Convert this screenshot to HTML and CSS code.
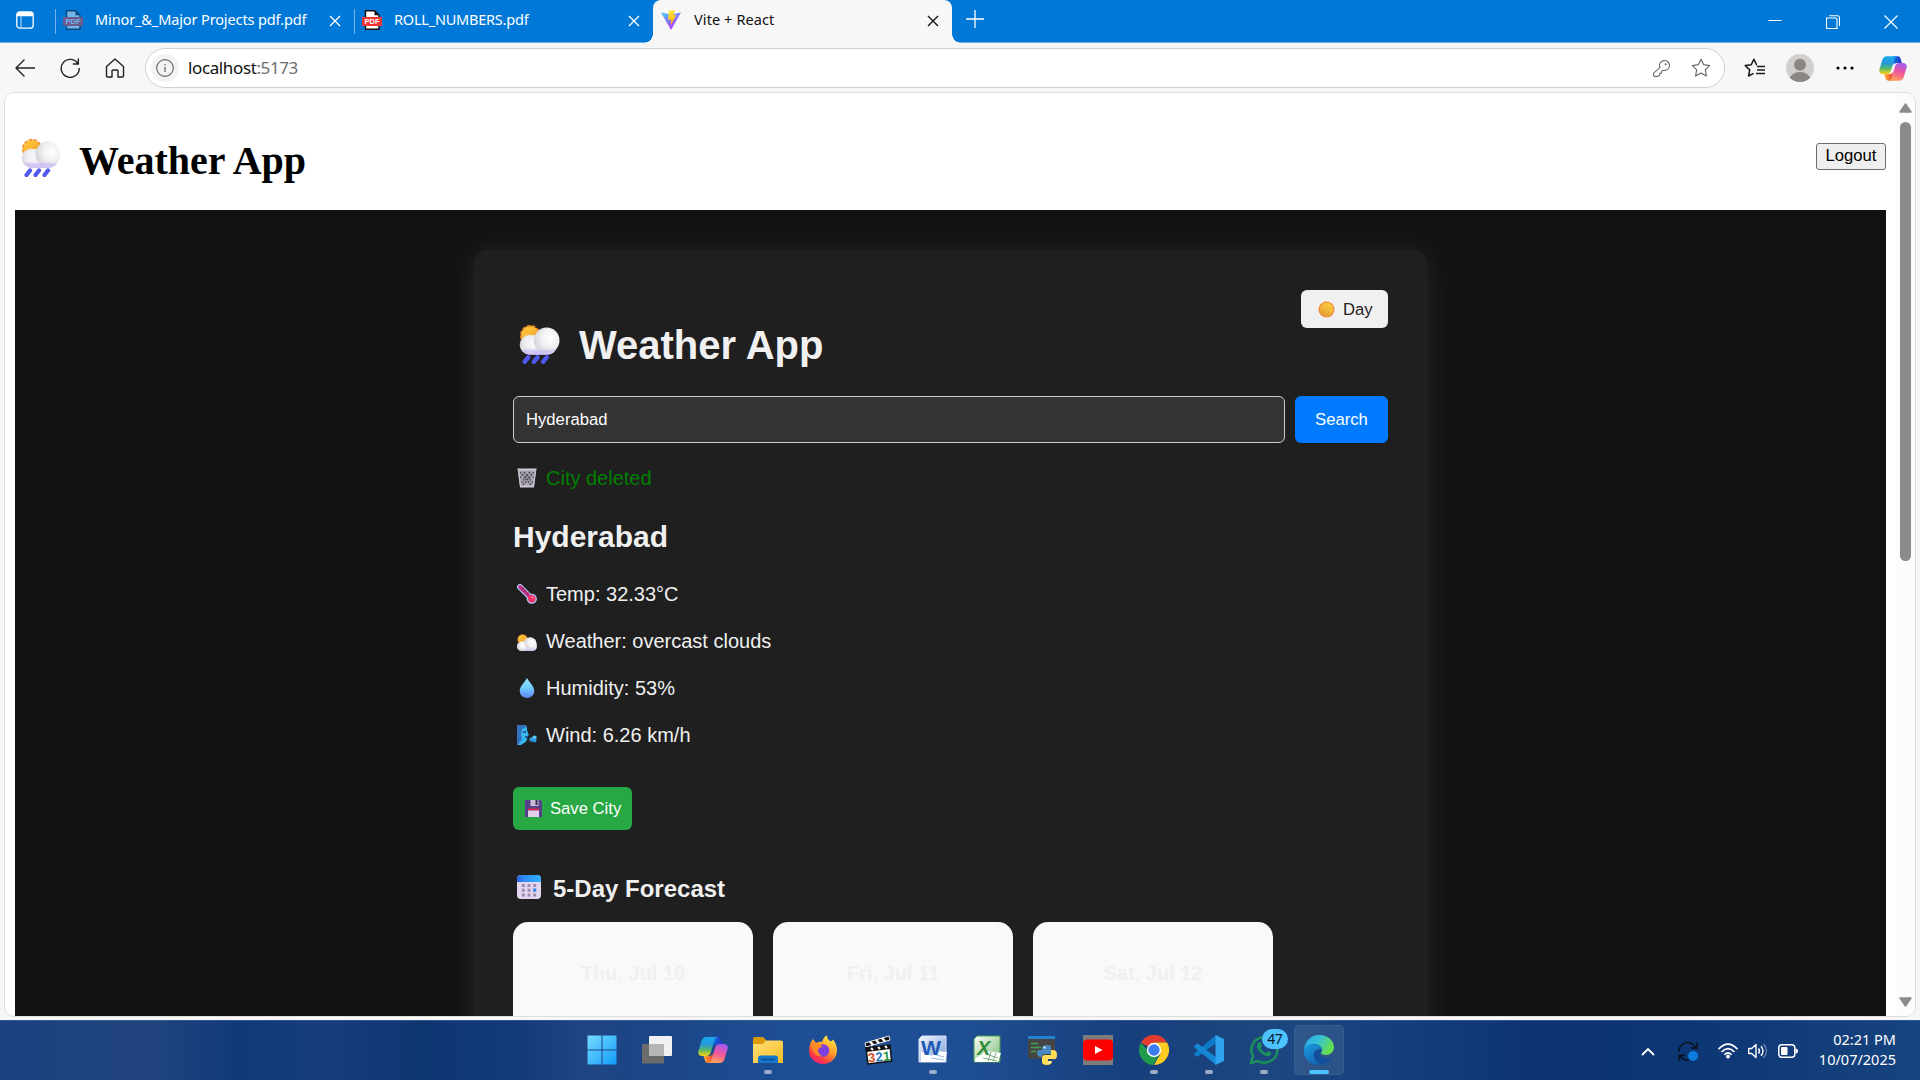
FILE: index.html
```html
<!DOCTYPE html>
<html lang="en">
<head>
<meta charset="utf-8">
<title>Vite + React</title>
<link rel="stylesheet" href="styles.css">
</head>
<body>
<svg class="defs" width="0" height="0" aria-hidden="true">
  <defs>
    <linearGradient id="sun" x1="0" y1="0" x2=".8" y2="1"><stop offset="0" stop-color="#ffd23b"/><stop offset="1" stop-color="#f3962c"/></linearGradient>
    <linearGradient id="day" x1=".8" y1="0" x2=".3" y2="1"><stop offset="0" stop-color="#ffd43f"/><stop offset="1" stop-color="#e09a35"/></linearGradient>
    <radialGradient id="puff" cx=".65" cy=".4" r=".65"><stop offset="0" stop-color="#fff"/><stop offset=".55" stop-color="#f1f0f2"/><stop offset="1" stop-color="#d6d4da"/></radialGradient>
    <linearGradient id="cloud" x1="0" y1="0" x2="0" y2="1"><stop offset="0" stop-color="#e4e3e7"/><stop offset=".6" stop-color="#efedf4"/><stop offset="1" stop-color="#cbbcf3"/></linearGradient>
    <linearGradient id="drop" x1="0" y1="0" x2="0" y2="1"><stop offset="0" stop-color="#9fe6ff"/><stop offset=".5" stop-color="#6fcbff"/><stop offset="1" stop-color="#5f83f2"/></linearGradient>
    <linearGradient id="cal" x1="0" y1="0" x2="1" y2="0"><stop offset="0" stop-color="#2f62e4"/><stop offset=".3" stop-color="#2f8cf8"/><stop offset="1" stop-color="#2fb1ff"/></linearGradient>
    <linearGradient id="vite" x1="0" y1="0" x2=".6" y2="1"><stop offset="0" stop-color="#41d1ff"/><stop offset=".6" stop-color="#8c6bff"/><stop offset="1" stop-color="#bd34fe"/></linearGradient>
    <linearGradient id="bolt" x1="0" y1="0" x2="0" y2="1"><stop offset="0" stop-color="#ffe83f"/><stop offset="1" stop-color="#ffa800"/></linearGradient>
    <linearGradient id="copL" x1=".3" y1="0" x2=".3" y2="1"><stop offset="0" stop-color="#18a9f2"/><stop offset=".4" stop-color="#2598d8"/><stop offset=".68" stop-color="#58b96b"/><stop offset="1" stop-color="#ffd40c"/></linearGradient>
    <linearGradient id="copR" x1=".7" y1="0" x2=".4" y2="1"><stop offset="0" stop-color="#a05cf2"/><stop offset=".5" stop-color="#f0569c"/><stop offset="1" stop-color="#ffa05c"/></linearGradient>
    <linearGradient id="copT" x1="0" y1="0" x2="1" y2="0"><stop offset="0" stop-color="#176ee8"/><stop offset="1" stop-color="#1c35bd"/></linearGradient>
    <linearGradient id="copB" x1="0" y1="0" x2="1" y2="0"><stop offset="0" stop-color="#ffb13a"/><stop offset="1" stop-color="#e8482f"/></linearGradient>
    <linearGradient id="win" x1="0" y1="0" x2="1" y2="1"><stop offset="0" stop-color="#76dcff"/><stop offset="1" stop-color="#129bfa"/></linearGradient>
    <linearGradient id="fold" x1="0" y1="0" x2="1" y2="1"><stop offset="0" stop-color="#ffe07a"/><stop offset="1" stop-color="#f9bd22"/></linearGradient>
    <linearGradient id="fox" x1=".8" y1="0" x2=".2" y2="1"><stop offset="0" stop-color="#fff04a"/><stop offset=".45" stop-color="#ff9a26"/><stop offset=".8" stop-color="#ff3348"/><stop offset="1" stop-color="#e6228f"/></linearGradient>
    <linearGradient id="word" x1="0" y1="0" x2="1" y2="1"><stop offset="0" stop-color="#f4f8fe"/><stop offset="1" stop-color="#7b9dd9"/></linearGradient>
    <linearGradient id="xls" x1="0" y1="0" x2="1" y2="1"><stop offset="0" stop-color="#fafdf8"/><stop offset="1" stop-color="#7fbd78"/></linearGradient>
    <linearGradient id="edgeT" x1="0" y1="0" x2="1" y2=".4"><stop offset="0" stop-color="#2aa5e8"/><stop offset=".5" stop-color="#35c1d9"/><stop offset="1" stop-color="#66e04f"/></linearGradient>
    <linearGradient id="edgeB" x1="0" y1="0" x2="1" y2="1"><stop offset="0" stop-color="#1b9de2"/><stop offset="1" stop-color="#0f4f9e"/></linearGradient>
    <symbol id="i-rain" viewBox="0 0 40 38">
      <circle cx="11" cy="10" r="9" fill="url(#sun)"/><circle cx="11" cy="10" r="9.300" fill="none" stroke="#f38b2b" stroke-width="1.500" stroke-dasharray="3.800 1.200"/>
      <rect x="1" y="10" width="36" height="19" rx="9.5" fill="url(#cloud)"/>
      <circle cx="10" cy="19" r="9.4" fill="url(#puff)" opacity=".7"/><circle cx="27" cy="15" r="12.500" fill="url(#puff)"/>
      <path d="M3 24h33a10 9 0 0 1-8 5H11a10 9 0 0 1-8-5z" fill="#cfc2f4" opacity=".75"/>
      <path d="M9 31.500l-3.500 4.500M18 31.500l-3.500 4.500M27 31.500l-3.500 4.500" stroke="#5058f0" stroke-width="4.200" stroke-linecap="round"/>
    </symbol>
    <symbol id="i-cloud" viewBox="0 0 20 17">
      <circle cx="5.600" cy="5.500" r="4.800" fill="url(#sun)" stroke="#e98b2c" stroke-dasharray="1.500 1"/>
      <circle cx="13" cy="9.800" r="6.600" fill="url(#puff)"/><rect y="8" width="20" height="9" rx="4.500" fill="url(#cloud)"/><circle cx="5" cy="12" r="4.700" fill="url(#puff)"/><circle cx="13.500" cy="9.500" r="5.800" fill="url(#puff)"/>
    </symbol>
    <symbol id="i-close" viewBox="0 0 12 12"><path d="M1 1l10 10M11 1L1 11" fill="none" stroke="currentColor" stroke-width="1.400"/></symbol>
    <symbol id="i-pdf" viewBox="0 0 20 20">
      <path d="M3.500.8h9L17 5.300v14H3.500z" fill="#fff" stroke="#111" stroke-width="1.400"/><path d="M12.500.8v4.500H17" fill="#111"/>
      <rect y="7" width="20" height="9" rx="1" fill="#ef3434"/><text x="10" y="14.200" text-anchor="middle" font-family="Liberation Sans" font-size="7.500" font-weight="700" fill="#fff">PDF</text>
    </symbol>
    <symbol id="i-copilot" viewBox="0 0 30 28">
      <path d="M15 1h4.500c3 0 3.500 2 4.200 4.500L24.500 8H19c-2 0-3 1-3.500 2.500z" fill="url(#copT)"/>
      <path d="M15 27h-4.500c-3 0-3.500-2-4.200-4.500L5.500 20H11c2 0 3-1 3.500-2.500z" fill="url(#copB)"/>
      <path d="M8.500 1H20c-2 0-2.800 1-3.400 3l-3.800 12.500C12 19 10.500 20 8 20H4.500C1 20-.2 18 .4 15L3.500 5C4.400 2.200 5.800 1 8.500 1z" fill="url(#copL)"/>
      <path d="M21.500 27H10c2 0 2.800-1 3.400-3l3.800-12.500C18 9 19.500 8 22 8h3.500c3.500 0 4.700 2 4.100 5l-3.100 10c-.9 2.800-2.300 4-5 4z" fill="url(#copR)"/>
    </symbol>
    <symbol id="i-star" viewBox="0 0 20 20"><path d="M10 1.200l2.700 5.500 6 .9-4.400 4.300 1.100 6.100L10 15.100 4.600 18l1.100-6.100L1.300 7.600l6-.9z" fill="none" stroke="currentColor" stroke-width="1.200" stroke-linejoin="round"/></symbol>
  </defs>
</svg>

<header class="tabbar">
  <svg class="tab-actions" viewBox="0 0 18 18"><rect x=".8" y=".8" width="16.400" height="16.400" rx="3" fill="none" stroke="#fff" stroke-width="1.300"/><path d="M1 3a2 2 0 0 1 2-2h12a2 2 0 0 1 2 2v2.200H1z" fill="#fff"/><path d="M5 5v12" stroke="#a9d2f3" stroke-width="1.200"/></svg>
  <div class="tab first"><svg class="fav faded"><use href="#i-pdf"/></svg><span class="tab-title t1">Minor_&amp;_Major Projects pdf.pdf</span><svg class="x"><use href="#i-close"/></svg></div>
  <div class="tab"><svg class="fav"><use href="#i-pdf"/></svg><span class="tab-title t2">ROLL_NUMBERS.pdf</span><svg class="x"><use href="#i-close"/></svg></div>
  <div class="tab active"><svg class="fav" viewBox="0 0 20 20"><path d="M0 2.500l10 2 10-2-10 17.500z" fill="url(#vite)"/><path d="M8 .8l6-.8-1.500 5.200 3-.4-5.800 10.700.5-6-3.200.6z" fill="url(#bolt)"/></svg><span class="tab-title t3">Vite + React</span><svg class="x"><use href="#i-close"/></svg></div>
  <svg class="newtab" viewBox="0 0 18 18"><path d="M9 0v18M0 9h18" stroke="#fff" stroke-width="1.300"/></svg>
  <div class="winctl">
    <svg viewBox="0 0 14 14"><path d="M.5 5.500h13" stroke="#fff"/></svg>
    <svg viewBox="0 0 14 14"><path d="M.5 3h9.500q1 0 1 1v9.500H1.500q-1 0-1-1zM3 .8h8.500q2 0 2 2V11" fill="none" stroke="#fff" stroke-width="1.100"/></svg>
    <svg viewBox="0 0 14 14"><path d="M.5.5l13 13M13.500.5l-13 13" stroke="#fff" stroke-width="1.200"/></svg>
  </div>
</header>

<nav class="toolbar">
  <svg class="nav back" viewBox="0 0 20 20"><path d="M20 10H1M9.500 1.500L1 10l8.500 8.500" fill="none" stroke="#222" stroke-width="1.400"/></svg>
  <svg class="nav reload" viewBox="0 0 20 20"><path d="M17.800 5.500A9 9 0 1 0 19.200 10M18.300.5V6h-5.500" fill="none" stroke="#222" stroke-width="1.400"/></svg>
  <svg class="nav home" viewBox="0 0 20 20"><path d="M1.500 8.500L10 1l8.500 7.500V18q0 1-1 1H13v-6q0-1-1-1H8q-1 0-1 1v6H2.500q-1 0-1-1z" fill="none" stroke="#222" stroke-width="1.400" stroke-linejoin="round"/></svg>
  <div class="omnibox">
    <span class="info"><svg viewBox="0 0 18 18"><circle cx="9" cy="9" r="8.300" fill="none" stroke="#6b6b6b" stroke-width="1.200"/><path d="M9 8v5M9 5v1.500" stroke="#6b6b6b" stroke-width="1.300"/></svg></span>
    <span class="url">localhost<span class="port">:5173</span></span>
    <svg class="key" viewBox="0 0 17 17"><path d="M7 7.700A5 5 0 1 1 10 10.300L8.500 11.500v1.700H6.700V15L5 16.400H1.500q-.9 0-.9-.9v-2.300z" fill="none" stroke="#6b6b6b" stroke-width="1.100" stroke-linejoin="round"/><circle cx="12.600" cy="4.300" r="1" fill="#6b6b6b"/></svg>
    <svg class="star"><use href="#i-star"/></svg>
  </div>
  <svg class="favs" viewBox="0 0 21 20"><path d="M13 6.700h-.5L10 1.200 7.300 6.700l-6 .9 4.400 4.300L4.600 18l5-2.700M13 8.500h8M13 12h8M12 15.500h9" fill="none" stroke="#1b1b1b" stroke-width="1.500" stroke-linejoin="round"/></svg>
  <svg class="avatar" viewBox="0 0 28 28"><clipPath id="av"><circle cx="14" cy="14" r="14"/></clipPath><g clip-path="url(#av)"><rect width="28" height="28" fill="#d2d0ce"/><circle cx="14" cy="10.800" r="6" fill="#8b8683"/><ellipse cx="14" cy="26" rx="10.500" ry="8" fill="#8b8683"/></g></svg>
  <svg class="dots" viewBox="0 0 18 4"><circle cx="2" cy="2" r="1.600"/><circle cx="9" cy="2" r="1.600"/><circle cx="16" cy="2" r="1.600"/></svg>
  <svg class="copilot"><use href="#i-copilot"/></svg>
</nav>

<main class="stage">
  <div class="viewport">
    <div class="page">
      <div class="site-head"><h1 class="brand"><svg><use href="#i-rain"/></svg><span>Weather App</span></h1><button class="logout">Logout</button></div>
      <div class="dark">
        <section class="panel">
          <div class="panel-head">
            <h1><svg><use href="#i-rain"/></svg><span>Weather App</span></h1>
            <button class="day"><svg viewBox="0 0 17 17"><circle cx="8.500" cy="8.500" r="7.300" fill="url(#day)"/><circle cx="8.500" cy="8.500" r="7.300" fill="none" stroke="#ef8a35" stroke-width="1.500" stroke-dasharray="3.200 .6"/></svg><span>Day</span></button>
          </div>
          <div class="search"><input value="Hyderabad" aria-label="City"><button>Search</button></div>
          <p class="line notice"><svg viewBox="0 0 20 20"><path d="M1 1h18l-2 18H3z" fill="#aaa5b3"/><path d="M3 4l12 14M7 4l9 11M12 4l5 6M17 4L5 18M13 4L4 15M8 4L3 10" stroke="#45424b" stroke-width="1.300" stroke-dasharray="1.800 1.200"/><path d="M.5 1.500h19M3 18.500h14" stroke="#cec9d4" stroke-width="2.200"/><path d="M1.500 3l2 15M18.500 3l-2 15" stroke="#cec9d4" stroke-width="1.300"/></svg><span>City deleted</span></p>
          <h2>Hyderabad</h2>
          <div class="stats">
            <p class="line"><svg viewBox="0 0 20 20"><path d="M3 3l11 11" stroke="#a9c5f0" stroke-width="6" stroke-linecap="round"/><circle cx="14.800" cy="14.800" r="5.100" fill="#a9c5f0"/><path d="M3 3l11 11" stroke="#c52d82" stroke-width="3.600" stroke-linecap="round"/><path d="M6.500 3.500L5 5M9 6L7.500 7.500M11.500 8.500L10 10" stroke="#402447" stroke-width="1"/><circle cx="14.800" cy="14.800" r="3.700" fill="#f8316b"/><circle cx="15.500" cy="13.500" r="1" fill="#ff88a8"/></svg><span>Temp: 32.33°C</span></p>
            <p class="line"><svg class="cl"><use href="#i-cloud"/></svg><span>Weather: overcast clouds</span></p>
            <p class="line"><svg viewBox="0 0 20 20"><path d="M10 0c1.500 3.500 7.300 8 7.300 13a7.300 7 0 0 1-14.600 0C2.700 8 8.500 3.500 10 0z" fill="url(#drop)"/></svg><span>Humidity: 53%</span></p>
            <p class="line"><svg viewBox="0 0 20 20"><path d="M0 0h8l2 2v3l1 3 1 2-1.500 1 .5 1-1 1v2l-1.500 2L4 20H0z" fill="#38b7ef"/><path d="M0 0h9l1 2-5 2-1 5 1 5-4 6H0z" fill="#3472bd"/><path d="M6 7h3M8 12h3" stroke="#1a3d85" stroke-width="1.300"/><circle cx="14.500" cy="14.500" r="2.200" fill="#2d91db"/><circle cx="17.500" cy="12.800" r="2.200" fill="#58c9f5"/><circle cx="17.500" cy="15.500" r="2" fill="#2396df"/></svg><span>Wind: 6.26 km/h</span></p>
          </div>
          <button class="save"><svg viewBox="0 0 17 17"><path d="M0 0h15.500L17 1.500V17H0z" fill="#55428a"/><path d="M5.500 0h8v6h-8z" fill="#c9bcd9"/><path d="M10.500 0h2v5h-2z" fill="#392858"/><path d="M3 8.500h11v2H3z" fill="#e0284f"/><path d="M3 10.500h11V17H3z" fill="#e0cfea"/></svg><span>Save City</span></button>
          <h3><svg viewBox="0 0 24 24"><rect width="24" height="24" rx="4" fill="#e3d6ef"/><path d="M0 7V4q0-4 4-4h16q4 0 4 4v3z" fill="url(#cal)"/><path d="M6.300 9v13M12 9v13M17.700 9v13" stroke="#9b8caf" stroke-width="3" stroke-dasharray="3 1.700"/><path d="M16.200 13.500h3v3h-3z" fill="#2d8df4"/></svg><span>5-Day Forecast</span></h3>
          <div class="cards"><article>Thu, Jul 10</article><article>Fri, Jul 11</article><article>Sat, Jul 12</article></div>
        </section>
      </div>
    </div>
    <div class="scroll"><svg viewBox="0 0 13 10"><path d="M6.500 1L12 9H1z" fill="#8b8b8b" stroke="#8b8b8b" stroke-linejoin="round" stroke-width="1.500"/></svg><div class="thumb"></div><svg viewBox="0 0 13 10"><path d="M6.500 9L12 1H1z" fill="#8b8b8b" stroke="#8b8b8b" stroke-linejoin="round" stroke-width="1.500"/></svg></div>
  </div>
</main>

<footer class="taskbar">
  <div class="apps">
    <div class="app"><svg viewBox="0 0 30 30"><path d="M.5.500h14v14H.500zM15.500.500h14v14h-14zM.500 15.500h14v14H.500zM15.500 15.500h14v14h-14z" fill="url(#win)"/></svg></div>
    <div class="app"><svg viewBox="0 0 30 30"><rect y="9" width="22" height="19.500" rx="1" fill="#6b6b6c"/><rect x="7" y="1" width="23" height="20" rx="1" fill="#f1f1f1"/><path d="M7 9h15v12H8q-1 0-1-1z" fill="#b5b5b6"/></svg></div>
    <div class="app"><svg><use href="#i-copilot"/></svg></div>
    <div class="app run"><svg viewBox="0 0 30 30"><path d="M0 4q0-2 2-2h8l3 3v4H0z" fill="#dc9a08"/><path d="M0 9h10l3-3.500h15q2 0 2 2V28H0z" fill="url(#fold)"/><path d="M5 28v-5q0-2.500 2.500-2.500h15q2.500 0 2.500 2.500v5z" fill="#1478ca"/><path d="M8.500 24.500h13" stroke="#0b4c8c" stroke-width="1.400"/></svg></div>
    <div class="app"><svg viewBox="0 0 30 30"><path d="M5 4l3 4q3-2 6-1 2-6 5-6.500 0 4 4 6l2-2q4 5 4 11a14 13.500 0 0 1-28 0Q1 9 5 4z" fill="url(#fox)"/><circle cx="15" cy="15.500" r="6.300" fill="#7c3fe0"/><path d="M3 11q4-4 8-2l4 3q-4 0-5 3 0 4 4 5.500-6 1-8-3T3 11z" fill="#ff8a24"/></svg></div>
    <div class="app"><svg viewBox="0 0 30 30"><path d="M2 8L26 1l1 4L3 12z" fill="#111" stroke="#eee"/><path d="M7 6.500l3 3.500M13 4.800l3 3.500M19 3l3 3.500" stroke="#fff" stroke-width="2.500"/><path d="M3 13l24-3 1.500 16L5 29z" fill="#fff" stroke="#111" stroke-width="1.500"/><path d="M3 13l24-3v4L3.500 17z" fill="#111"/><path d="M8 13l2 2M15 12l2 2M22 11l2 2" stroke="#fff" stroke-width="2"/><g transform="rotate(-6 15 22)" font-family="Liberation Sans" font-weight="700" font-size="13"><text x="5" y="26.500" fill="#d94a22">3</text><text x="12.500" y="26.500" fill="#2878c4">2</text><text x="20" y="26.500" fill="#28953c">1</text></g></svg></div>
    <div class="app run"><svg viewBox="0 0 30 30"><path d="M4 1h24v26H1V4z" fill="url(#word)" stroke="#d7e4f7"/><path d="M3 27V17l11 4 2-5 13 1-2 10z" fill="#fff"/><path d="M15 19l11 3M13 23l13 2" stroke="#9cb6df"/><text x="3" y="20" font-family="Liberation Sans" font-weight="700" font-size="21" textLength="20" lengthAdjust="spacingAndGlyphs" fill="#1d5bb5">W</text></svg></div>
    <div class="app"><svg viewBox="0 0 30 30"><path d="M4 1h23v26H1V4z" fill="url(#xls)" stroke="#4c9c52"/><path d="M2 24l12-8 14 2-3 9H2z" fill="#fff"/><path d="M13 19l12 4M10 23l14 3M18 17l-3 9M23 18l-3 8" stroke="#77ae79"/><text x="4" y="20" font-family="Liberation Sans" font-weight="700" font-style="italic" font-size="20" fill="#318f3c">X</text></svg></div>
    <div class="app"><svg viewBox="0 0 30 30"><path d="M0 1h27v23H0z" fill="#454545"/><path d="M0 1h27v3H0z" fill="#2582cc"/><path d="M3 8.500h7M3 12.500h10M3 16.500h5" stroke="#43a455" stroke-width="1.300"/><path d="M14 20v-7q0-3 5-3t4 3v6h-7q-2 0-2 3h-2q-3-1-3-4t3-3h7" fill="#4788bd"/><path d="M23 15h2q4 0 4 5t-4 4h-5v2h4q0 4-5 4t-5-3v-4q0-3 3-3h6z" fill="#ffdd57"/><circle cx="16.500" cy="12.500" r="1" fill="#fff"/><circle cx="21.500" cy="27.500" r="1" fill="#fff"/></svg></div>
    <div class="app"><svg viewBox="0 0 30 30"><path d="M0 0h30v30H0z" fill="#7c7c7c"/><rect y="4.500" width="30" height="21" rx="4" fill="#f00"/><path d="M12 11l7.500 4-7.500 4z" fill="#fff"/></svg></div>
    <div class="app run"><svg viewBox="0 0 30 30"><path d="M15 15L2 7.500A15 15 0 0 1 28 7.500H15z" fill="#e33b2e"/><path d="M2 7.500A15 15 0 0 0 14 30l7-11.500L15 15H8.500z" fill="#229a4b"/><path d="M28 7.500H15L21.500 18.700 15 30A15 15 0 0 0 28 7.500z" fill="#fdca22"/><circle cx="15" cy="15" r="7.200" fill="#fff"/><circle cx="15" cy="15" r="5.700" fill="#3b7df0"/></svg></div>
    <div class="app run"><svg viewBox="0 0 30 30"><path d="M22 8L3.500 22 0 19.500v-1L22 0z" fill="#0b7bc6"/><path d="M22 22L3.500 8.500 0 11v1l22 18z" fill="#1687d4"/><path d="M21.500 0L30 4v22l-8.500 4z" fill="#2fa5ef"/></svg></div>
    <div class="app run"><svg viewBox="0 0 30 30"><path d="M2 28l2-7a13 12.800 0 1 1 5 5z" fill="none" stroke="#1c9159" stroke-width="2.500"/><path d="M9 8q2-2 3 0l1 3-1.500 2q2 4 5.500 5l2-2 3 1.500q1 2-2 3.500-4 1-9-4T9 8z" fill="#1c9159"/></svg><span class="badge">47</span></div>
    <div class="app current"><svg viewBox="0 0 30 30"><path d="M0 17C0 6 7 0 15 0c9 0 15 6 15 12 0 5-4 8-8 8-3 0-5-1-5-2s1-1 1-3c0-3-3-6-8-6-6 0-10 4-10 8z" fill="url(#edgeT)"/><path d="M0 17c0-5 4-8 9-8 5 0 9 3 9 6-6-4-12 5-5 11 5 4 11 3 15-2-3 4-7 6-12 6C6 30 0 24 0 17z" fill="url(#edgeB)"/><path d="M18 15c-6-1-9 2-8 7 1 4 5 8 9 7 4-1 7-3 9-6-4 2-12 1-12-5q0-2 2-3z" fill="#124f9b"/></svg></div>
  </div>
  <div class="tray">
    <svg class="chev" viewBox="0 0 14 9"><path d="M1 8l6-6 6 6" fill="none" stroke="#fff" stroke-width="1.900"/></svg>
    <svg class="sync" viewBox="0 0 20 20"><path d="M.700 11A9 9 0 0 1 17.500 6M19 1v6h-6M1 20v-5.500h6M2 15q4 5 9 4" fill="none" stroke="#0a0d12" stroke-width="1.300"/><circle cx="15" cy="15" r="5" fill="#0c7ce0"/></svg>
    <svg class="wifi" viewBox="0 0 20 16"><path d="M.500 6.200Q10-4 19.500 6.200M3.500 9Q10 2.300 16.500 9M6.300 11.800Q10 8 13.700 11.800" fill="none" stroke="#fff" stroke-width="1.600"/><circle cx="10" cy="13.500" r="1.900" fill="#fff"/></svg>
    <svg class="vol" viewBox="0 0 20 16"><path d="M.700 5.500h3L8 1.500v13l-4.300-4h-3z" fill="none" stroke="#fff" stroke-width="1.400" stroke-linejoin="round"/><path d="M10.500 5.500q2 2.500 0 5M13 3.200q4 4.800 0 9.600" fill="none" stroke="#fff" stroke-width="1.400"/><path d="M15.500 1q6 7 0 14" fill="none" stroke="#7188ad" stroke-width="1.200"/></svg>
    <svg class="bat" viewBox="0 0 20 14"><rect x=".8" y=".8" width="16" height="12.400" rx="3" fill="none" stroke="#fff" stroke-width="1.500"/><rect x="3" y="3" width="6.500" height="8" rx="1" fill="#fff"/><path d="M17.500 4.500q2.500 0 2.500 2.500t-2.500 2.500z" fill="#fff"/></svg>
    <div class="clock"><span class="time">02:21 PM</span><span class="date">10/07/2025</span></div>
  </div>
</footer>
</body>
</html>
```

FILE: styles.css
```css
* { box-sizing: border-box; }
html, body { margin: 0; height: 100%; overflow: hidden; }
body { display: flex; flex-direction: column; width: 1920px; height: 1080px; background: #f7f7f7; font-family: "Liberation Sans", Arial, sans-serif; }
svg { display: block; flex: none; }
.defs { position: absolute; }
h1, h2, h3, p { margin: 0; }
button, input { font-family: inherit; font-size: 16.67px; }

/* Tab strip */
.tabbar { display: flex; flex: none; height: 43px; background: #0078d7; border-bottom: 1px solid #66aee8; font-family: "Noto Sans", sans-serif; color: #fff; }
.tab-actions { width: 18px; height: 18px; margin: 11px 21px 0 16px; }
.tab { display: flex; align-items: flex-start; width: 299px; padding: 10px 13px 0 8px; background: linear-gradient(#73b5ea, #73b5ea) 0 9px / 1px 25px no-repeat; }
.fav { width: 20px; height: 20px; }
.faded { opacity: .45; }
.tab-title { flex: 1; margin: -1px 0 0 12px; font-size: 14.5px; line-height: 20px; white-space: nowrap; }
.t1 { letter-spacing: -.12px; }
.t2 { letter-spacing: -.22px; }
.t3 { margin-left: 13px; letter-spacing: .1px; }
.x { width: 12px; height: 12px; margin-top: 5px; }
.tab.active { position: relative; height: 43px; padding-left: 8px; background: #f7f7f7; border-radius: 8px 8px 0 0; color: #111; }
.tab.active::before, .tab.active::after { content: ""; position: absolute; bottom: 0; width: 9px; height: 9px; }
.tab.active::before { left: -9px; background: radial-gradient(circle at 0 0, transparent 8.5px, #f7f7f7 9px); }
.tab.active::after { right: -9px; background: radial-gradient(circle at 100% 0, transparent 8.5px, #f7f7f7 9px); }
.newtab { width: 18px; height: 18px; margin: 10px 0 0 14px; }
.winctl { display: flex; gap: 44px; margin: 15px 22px 0 auto; }
.winctl svg { width: 14px; height: 14px; }

/* Address bar */
.toolbar { display: flex; flex: none; align-items: center; height: 49px; padding: 1px 13px 0 15px; }
.nav { width: 20px; height: 20px; margin-top: -1px; }
.back { margin-right: 25px; }
.reload { margin-right: 25px; }
.home { margin-right: 20px; }
.omnibox { display: flex; align-items: center; width: 1580px; height: 40px; padding: 0 13px 0 5px; border: 1px solid #cfcfcf; border-radius: 20px; background: #fff; }
.info { display: flex; align-items: center; justify-content: center; width: 28px; height: 28px; border-radius: 50%; background: #f3f3f3; }
.info svg { width: 18px; height: 18px; }
.url { flex: 1; margin-left: 9px; font: 17px/24px "Noto Sans", sans-serif; letter-spacing: -.38px; color: #111; }
.port { color: #6d6d6d; }
.key { width: 17px; height: 17px; margin-right: 21px; }
.star { width: 20px; height: 20px; color: #6b6b6b; }
.favs { width: 21px; height: 20px; margin-left: 19px; }
.avatar { width: 28px; height: 28px; margin-left: 21px; }
.dots { width: 18px; height: 4px; margin-left: 22px; }
.copilot { width: 28px; height: 27px; margin-left: auto; }

/* Browser viewport */
.stage { flex: 1; min-height: 0; padding: 0 4px 3px; }
.viewport { display: flex; height: 925px; border: 1px solid #dedede; border-radius: 10px; background: #fff; overflow: hidden; }
.page { display: flex; flex-direction: column; width: 1891px; padding: 0 10px; }
.site-head { display: flex; flex: none; justify-content: space-between; height: 117px; }
.brand { display: flex; margin-top: 45px; font: bold 40px/46px "Liberation Serif", serif; color: #000; }
.brand svg { width: 40px; height: 38px; margin: 1px 18px 0 6px; }
.logout { width: 70px; height: 27px; margin-top: 50px; padding: 0 0 2px; border: 1px solid #6b6b6b; border-radius: 3px; background: #efefef; color: #000; line-height: 19px; }
.dark { flex: 1; min-height: 0; padding-top: 40px; background: #121212; overflow: hidden; }
.panel { width: 955px; height: 1400px; margin: 0 auto; padding: 40px; border-radius: 15px; background: #1f1f1f; box-shadow: 0 0 31px rgba(255, 255, 255, .08); color: #f0f0f0; }
.panel-head { display: flex; justify-content: space-between; height: 106px; }
.panel-head h1 { display: flex; margin-top: 32px; font-size: 40px; line-height: 46px; }
.panel-head h1 svg { width: 41px; height: 39px; margin: 3px 19px 0 6px; }
.day { display: flex; align-items: center; width: 87px; height: 38px; padding: 0 0 0 17px; border: 0; border-radius: 6px; background: #f0f0f0; color: #222; }
.day svg { width: 17px; height: 17px; margin-right: 8px; }
.day span, .save span { padding-top: 1px; }
.search { display: flex; gap: 10px; height: 47px; }
.search input { flex: 1; min-width: 0; padding: 0 12px; border: 1px solid #ccc; border-radius: 6px; background: #333; color: #fff; outline: 0; }
.search button { width: 93px; border: 0; border-radius: 6px; background: #007bff; color: #fff; }
.line { display: flex; height: 23px; padding-left: 4px; font-size: 20px; line-height: 23px; }
.line svg { width: 20px; height: 20px; margin: 1px 9px 0 0; }
.line .cl { height: 17px; margin-top: 4px; }
.notice { margin-top: 24px; color: #008000; }
h2 { margin: 30px 0 29px; font-size: 30px; line-height: 34px; }
.stats { display: flex; flex-direction: column; gap: 24px; }
.save { display: flex; align-items: center; width: 119px; height: 43px; margin-top: 40px; padding: 0 0 0 12px; border: 0; border-radius: 6px; background: #28a745; color: #fff; white-space: nowrap; }
.save svg { width: 17px; height: 17px; margin-right: 8px; }
h3 { display: flex; margin: 45px 0 20px; padding-left: 4px; font-size: 24px; line-height: 27px; }
h3 svg { width: 24px; height: 24px; margin: 0 12px 0 0; }
.cards { display: flex; gap: 20px; }
.cards article { width: 240px; height: 320px; padding-top: 40px; border-radius: 15px; background: #f9f9f9; color: #f0f0f0; font-size: 20px; font-weight: bold; line-height: 23px; text-align: center; }
.scroll { display: flex; flex: 1; flex-direction: column; align-items: center; padding: 10px 0 9px; background: #fcfcfc; }
.scroll svg { width: 13px; height: 10px; }
.thumb { width: 11px; height: 439px; margin: 9px 0 auto; border-radius: 6px; background: #8b8b8b; }

/* Taskbar */
.taskbar { display: flex; flex: none; height: 60px; border-top: 1px solid #35598c; background: linear-gradient(90deg, #1c417e 0, #20437f 8%, #103a77 12.5%, #173d7c 17%, #0e3671 22%, #133a7a 27%, #204582 30.5%, #1b4587 33%, #1e4f94 42%, #1e4f94 50%, #173f7c 59%, #1d4780 66%, #15407c 72%, #0d3470 80%, #0d3674 88%, #16447f 100%); }
.apps { display: flex; margin-left: 577.3px; padding-top: 4px; }
.app { position: relative; display: flex; justify-content: center; width: 50px; height: 50px; margin-right: 5.13px; padding-top: 10px; border-radius: 5px; }
.app svg { width: 30px; height: 30px; }
.run::after, .current::after { content: ""; position: absolute; left: 21px; bottom: 1px; width: 8px; height: 4px; border-radius: 2px; background: #9caccb; }
.current { background: rgba(255, 255, 255, .09); box-shadow: inset 0 0 0 1px rgba(255, 255, 255, .06); }
.current::after { left: 15px; width: 20px; background: #4cc2ff; }
.badge { position: absolute; top: 4px; right: 1px; width: 26px; height: 20px; border-radius: 10px; background: #4cc2ff; color: #0a1a2a; font: 14px/20px "Noto Sans", sans-serif; letter-spacing: -.5px; text-align: center; }
.tray { display: flex; align-items: center; margin-left: auto; padding-right: 24px; }
.tray svg { margin-top: 1px; }
.chev { width: 14px; height: 9px; margin-right: 23px; }
.sync { width: 20px; height: 20px; margin-right: 20px; }
.wifi { width: 20px; height: 16px; margin-right: 10px; }
.vol { width: 20px; height: 16px; margin-right: 10px; }
.bat { width: 20px; height: 14px; }
.clock { display: flex; flex-direction: column; width: 98px; padding-bottom: 4px; color: #fff; font: 14.5px/20px "Noto Sans", sans-serif; text-align: right; }
.time { letter-spacing: 0; }
.date { letter-spacing: 0; }
```
